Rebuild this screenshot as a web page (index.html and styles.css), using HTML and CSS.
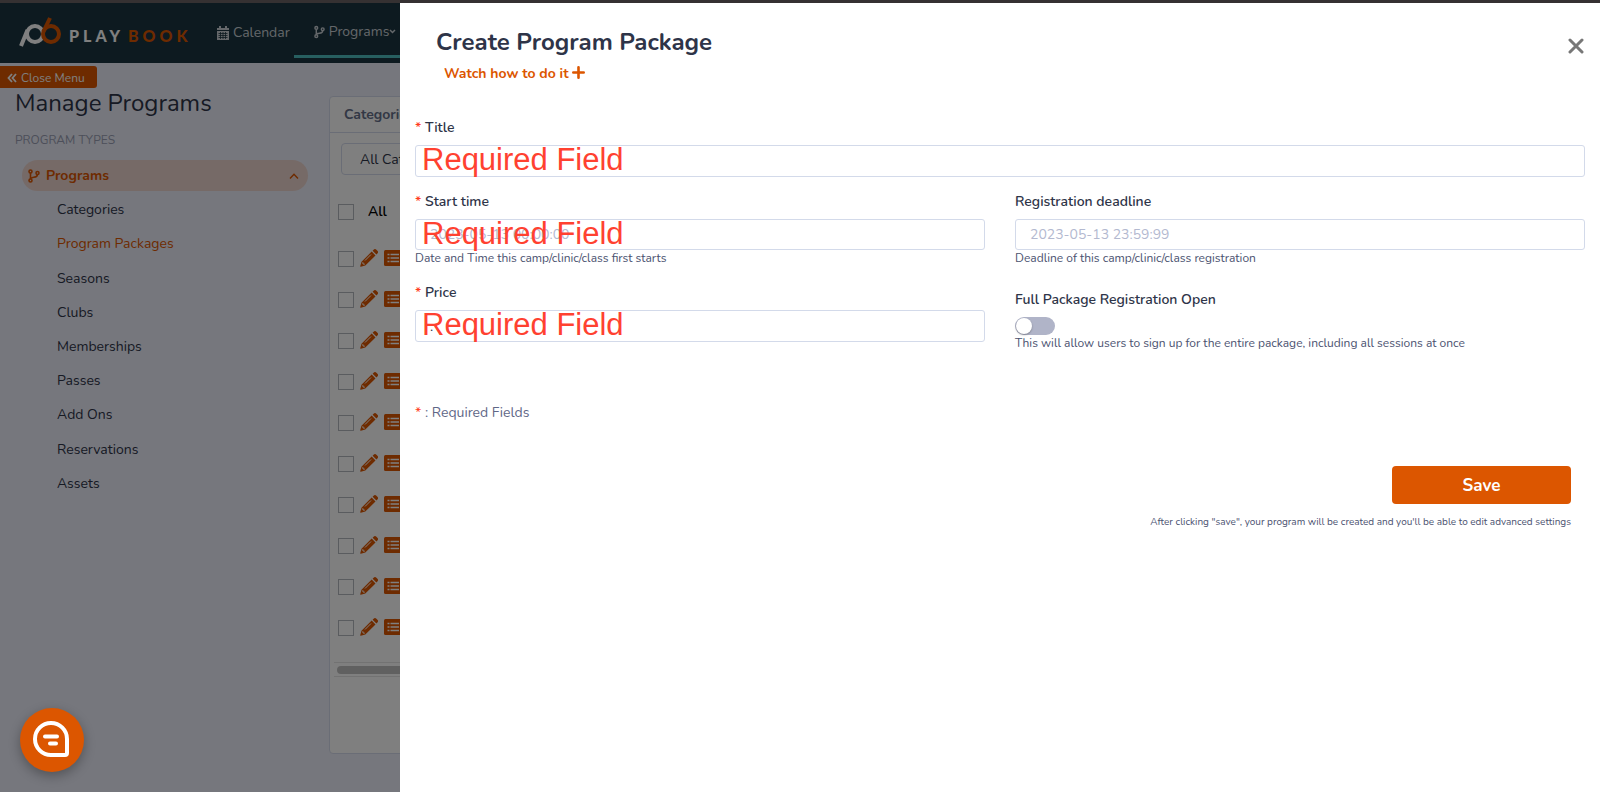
FILE: index.html
```html
<!DOCTYPE html>
<html lang="en">
  <head>
    <meta charset="UTF-8">
    <title>Create Program Package</title>
    <meta name="viewport" content="width=device-width, initial-scale=1">
    <link rel="stylesheet" href="styles.css">
  </head>
  <body>
    <svg class="sprite" aria-hidden="true">
      <symbol id="icon-branch" viewBox="0 0 12 14">
        <g fill="none" stroke="currentColor" stroke-width="1.6">
          <circle cx="2.5" cy="2.5" r="1.5"/>
          <circle cx="2.5" cy="11.5" r="1.5"/>
          <circle cx="9.5" cy="4" r="1.5"/>
          <path d="M2.5 4v6M9.5 5.5c0 3-3 2.500-5.500 3.200C3 9 2.500 9.500 2.500 10"/>
        </g>
      </symbol>
      <symbol id="icon-pencil" viewBox="0 0 18 18">
        <path fill="currentColor" d="M12.600 1.700l1-1a2 2 0 0 1 2.800 0l1 1a2 2 0 0 1 0 2.800l-1 1zM11.700 2.600l3.800 3.800L5.300 16.600l-4.500 1.200c-.4.100-.7-.2-.6-.6l1.300-4.400z"/>
        <path fill="none" stroke="#fff" stroke-width="1" d="M5 11.500l6-6M2.800 13.200l.2 1.800 1.800.2"/>
      </symbol>
      <symbol id="icon-list" viewBox="0 0 18 16">
        <rect width="18" height="16" rx="1.500" fill="currentColor"/>
        <path fill="none" stroke="#fff" stroke-width="1.400" d="M3.500 4.500h2M6.500 4.500H15M3.500 8h2M6.500 8H15M3.500 11.500h2M6.500 11.500H15"/>
      </symbol>
    </svg>

    <div class="top-strip"></div>

    <div class="page">
      <header class="navbar">
        <a href="#" class="logo">
          <svg width="44" height="32" viewBox="0 0 44 32" fill="none" stroke-width="4">
            <path stroke="#fff" d="M3 29L9.500 13"/>
            <circle stroke="#fff" cx="17" cy="17" r="8"/>
            <circle stroke="#dc5600" cx="33" cy="17" r="8"/>
            <path stroke="#dc5600" d="M25.500 14.500L32 1"/>
          </svg>
          <span class="logo-text">PLAY<b>BOOK</b></span>
        </a>
        <a href="#" class="nav-link">
          <svg width="12" height="14" viewBox="0 0 12 14">
            <path fill="currentColor" d="M2 0h2v2h4V0h2v2h2v2H0V2h2zM0 5h12v9H0z"/>
            <path stroke="#1a3540" d="M1.500 7.500h9M1.500 9.500h9M1.500 11.500h9M3.500 6v7M6 6v7M8.500 6v7" stroke-width=".8"/>
          </svg>
          Calendar
        </a>
        <a href="#" class="nav-link active">
          <svg width="11" height="14"><use href="#icon-branch"/></svg>
          Programs
          <svg class="caret" width="7" height="5" viewBox="0 0 7 5" fill="none" stroke="currentColor" stroke-width="1.500"><path d="M1 1l2.500 2.500L6 1"/></svg>
        </a>
      </header>

      <div class="content">
        <aside class="sidebar">
          <button type="button" class="close-menu">
            <svg width="10" height="10" viewBox="0 0 10 10" fill="none" stroke="currentColor" stroke-width="1.800"><path d="M5 1L1.500 5 5 9M9 1L5.500 5 9 9"/></svg>
            Close Menu
          </button>
          <h1>Manage Programs</h1>
          <h6>PROGRAM TYPES</h6>
          <a href="#" class="menu-group">
            <svg width="12" height="14"><use href="#icon-branch"/></svg>
            <span>Programs</span>
            <svg width="10" height="6" viewBox="0 0 10 6" fill="none" stroke="currentColor" stroke-width="1.400"><path d="M1 5.500L5 1.200 9 5.500"/></svg>
          </a>
          <nav class="submenu">
            <a href="#">Categories</a>
            <a href="#" class="current">Program Packages</a>
            <a href="#">Seasons</a>
            <a href="#">Clubs</a>
            <a href="#">Memberships</a>
            <a href="#">Passes</a>
            <a href="#">Add Ons</a>
            <a href="#">Reservations</a>
            <a href="#">Assets</a>
          </nav>
        </aside>

        <main class="card">
          <div class="card-header">Categories</div>
          <div class="card-body">
            <select class="filter" aria-label="Category">
              <option>All Categories</option>
            </select>
            <table class="packages">
              <thead>
                <tr><th><input type="checkbox" id="all"></th><th class="all"><label for="all">All</label></th></tr>
              </thead>
              <tbody id="rows"></tbody>
            </table>
            <div class="scrollbar"><div class="thumb"></div></div>
          </div>
        </main>
      </div>
    </div>

    <div class="overlay"></div>

    <section class="drawer">
      <div class="drawer-header">
        <div>
          <h2>Create Program Package</h2>
          <a href="#" class="watch">
            Watch how to do it
            <svg width="13" height="13" viewBox="0 0 13 13" stroke="currentColor" stroke-width="2.600" stroke-linecap="round"><path d="M6.500 1.300v10.400M1.300 6.500h10.400"/></svg>
          </a>
        </div>
        <button type="button" class="close" aria-label="Close">
          <svg width="16" height="16" viewBox="0 0 16 16" stroke="currentColor" stroke-width="3" stroke-linecap="round"><path d="M2 2l12 12M14 2L2 14"/></svg>
        </button>
      </div>

      <form id="package-form">
        <div class="field wide">
          <label for="title"><i>*</i> Title</label>
          <div class="control">
            <input type="text" id="title" name="title">
            <span class="note">Required Field</span>
          </div>
        </div>

        <div class="field">
          <label for="start"><i>*</i> Start time</label>
          <div class="control date">
            <input type="text" id="start" name="start" placeholder="2023-05-13 00:00:00">
            <span class="note">Required Field</span>
          </div>
          <small>Date and Time this camp/clinic/class first starts</small>
        </div>

        <div class="field">
          <label for="deadline">Registration deadline</label>
          <div class="control date">
            <input type="text" id="deadline" name="deadline" placeholder="2023-05-13 23:59:99">
          </div>
          <small>Deadline of this camp/clinic/class registration</small>
        </div>

        <div class="field">
          <label for="price"><i>*</i> Price</label>
          <div class="control">
            <input type="text" id="price" name="price" value=".">
            <span class="note">Required Field</span>
          </div>
        </div>

        <div class="field toggle-field">
          <label for="open">Full Package Registration Open</label>
          <input type="checkbox" id="open" name="open" class="toggle">
          <small>This will allow users to sign up for the entire package, including all sessions at once</small>
        </div>

        <p class="legend"><i>*</i> : Required Fields</p>

        <div class="actions">
          <button type="submit" class="save">Save</button>
          <p>After clicking "save", your program will be created and you'll be able to edit advanced settings</p>
        </div>
      </form>
    </section>

    <button type="button" class="chat" aria-label="Chat">
      <svg width="36" height="36" viewBox="0 0 36 36" fill="none" stroke="#fff" stroke-width="4" stroke-linecap="round" stroke-linejoin="round">
        <path d="M18 2a16 16 0 0 0 0 32h14a2 2 0 0 0 2-2V18A16 16 0 0 0 18 2z"/>
        <path d="M12 15.500h12M17 22.500h6"/>
      </svg>
    </button>

    <script>
      // Package rows
      const rows = document.getElementById('rows');
      for (let i = 1; i <= 10; i++) {
        rows.insertAdjacentHTML('beforeend', `
          <tr>
            <td><input type="checkbox" aria-label="Select package ${i}"></td>
            <td>
              <div class="row-actions">
                <a href="#" aria-label="Edit"><svg width="18" height="18"><use href="#icon-pencil"/></svg></a>
                <a href="#" aria-label="Details"><svg width="18" height="16"><use href="#icon-list"/></svg></a>
              </div>
            </td>
          </tr>`);
      }

      document.getElementById('package-form').addEventListener('submit', function (e) {
        e.preventDefault();
      });
    </script>
  </body>
</html>
```
FILE: styles.css
```css
* {
  box-sizing: border-box;
}

body {
  margin: 0;
  min-height: 100vh;
  background: #eceefa;
  font-family: Nunito, "Noto Sans", sans-serif;
  font-size: 14px;
  line-height: 20px;
  color: #2e3448;
  overflow: hidden;
}

a {
  color: inherit;
  text-decoration: none;
}

button {
  border: 0;
  font-family: inherit;
  cursor: pointer;
}

h1, h2, h6, p {
  margin: 0;
}

.sprite {
  display: none;
}

.top-strip {
  height: 3px;
  background: #353132;
}

/* Page behind the drawer */
.page {
  display: flex;
  flex-direction: column;
  height: calc(100vh - 3px);
}

.navbar {
  display: flex;
  flex: none;
  height: 60px;
  padding-left: 18px;
  background: #1a3540;
  color: #fff;
}

.logo {
  display: flex;
  align-items: center;
  gap: 7px;
  width: 191px;
}

.logo-text {
  padding-top: 4px;
  font: 900 16px Lato, sans-serif;
  letter-spacing: 4px;
}

.logo-text b {
  margin-left: 4px;
  color: #dc5600;
}

.nav-link {
  display: flex;
  align-items: center;
  gap: 4px;
  padding: 0 4px 0 8px;
  color: #c8ced4;
}

.nav-link.active {
  margin-bottom: 5px;
  padding-top: 5px;
  padding-left: 20px;
  border-bottom: 3px solid #4fbfc0;
}

.nav-link .caret {
  margin-left: -4px;
}

.content {
  display: flex;
  flex: 1;
}

.sidebar {
  width: 329px;
  flex: none;
}

.close-menu {
  display: flex;
  align-items: center;
  gap: 4px;
  height: 22px;
  margin-top: 3px;
  padding: 1px 12px 0 7px;
  border-radius: 0 3px 3px 0;
  background: #dc5600;
  color: #fff;
  font-size: 12px;
}

h1 {
  padding: 0 15px;
  font-size: 24px;
  font-weight: 400;
  line-height: 30px;
}

h6 {
  margin: 13px 15px 11px;
  font-size: 12px;
  font-weight: 400;
  line-height: 18px;
  color: #9a9fb4;
}

.menu-group {
  display: flex;
  align-items: center;
  gap: 6px;
  height: 31px;
  margin: 0 21px 0 22px;
  padding: 0 9px 0 6px;
  border-radius: 16px;
  background: #ecd5cf;
  color: #dc5600;
  font-weight: 700;
}

.menu-group span {
  flex: 1;
}

.submenu {
  display: grid;
  grid-auto-rows: 1fr;
  align-items: center;
  height: 308px;
  margin: 2px 0 0 57px;
}

.submenu .current {
  color: #dc5600;
}

.card {
  flex: 1;
  margin: 33px 15px 38px 0;
  border: 1px solid #d5dbec;
  border-radius: 4px;
  background: #fff;
}

.card-header {
  height: 36px;
  padding: 8px 14px;
  border-bottom: 1px solid #d5dbec;
  color: #66708a;
  font-weight: 700;
}

.card-body {
  padding: 10px 0 0 4px;
}

.filter {
  appearance: none;
  display: block;
  width: 300px;
  height: 32px;
  margin-left: 7px;
  padding: 1px 18px 0;
  border: 1px solid #d5dbec;
  border-radius: 4px;
  background: #fff;
  color: inherit;
  font: inherit;
}

.packages {
  height: 463px;
  margin-top: 10px;
  margin-left: 4px;
  border-collapse: collapse;
}

.packages th,
.packages td {
  padding: 0;
  height: 40px;
  text-align: left;
}

.packages thead th {
  height: 54px;
}

.packages .all {
  padding-left: 14px;
  color: #000;
  font-weight: 600;
}

.packages input {
  appearance: none;
  display: block;
  width: 16px;
  height: 16px;
  margin: 0;
  border: 1px solid #b4b8be;
}

.row-actions {
  display: flex;
  align-items: center;
  gap: 6px;
  padding: 0 0 2px 6px;
  color: #dc5600;
}

.row-actions svg {
  display: block;
}

.scrollbar {
  height: 15px;
  margin-top: 14px;
  padding: 3px;
  border-top: 1px solid #e4e4e4;
  border-bottom: 1px solid #e4e4e4;
}

.thumb {
  width: 50%;
  height: 8px;
  border-radius: 4px;
  background: #c1c1c1;
}

.overlay {
  position: fixed;
  inset: 3px 0 0;
  background: rgba(0, 0, 0, 0.5);
}

/* Drawer */
.drawer {
  position: fixed;
  top: 3px;
  right: 0;
  bottom: 0;
  width: 75%;
  padding: 0 15px;
  background: #fff;
}

.drawer-header {
  display: flex;
  justify-content: space-between;
  align-items: flex-start;
  padding: 24px 0 0 21px;
}

h2 {
  font-size: 24px;
  font-weight: 700;
  line-height: 30px;
}

.watch {
  display: flex;
  align-items: flex-start;
  gap: 3px;
  margin: 7px 8px 5px;
  color: #dc5600;
  font-weight: 700;
}

.watch svg {
  margin-top: 2px;
}

.close {
  margin-top: 11px;
  padding: 0 1px;
  background: none;
  color: #777;
}

.close svg {
  display: block;
}

form {
  display: grid;
  grid-template-columns: 1fr 1fr;
  column-gap: 30px;
  padding-top: 28px;
}

.wide,
.legend,
.actions {
  grid-column: 1 / -1;
}

.field label {
  display: block;
  margin-bottom: 6px;
  font-weight: 600;
  line-height: 22px;
}

i {
  color: #ff3b20;
  font-style: normal;
}

.control {
  position: relative;
}

.control input {
  display: block;
  width: 100%;
  height: 32px;
  padding: 0 14px;
  border: 1px solid #d3daea;
  border-radius: 3px;
  color: #2e3448;
  font: inherit;
}

.control.date input {
  height: 31px;
}

.control input::placeholder {
  color: #b3b9d0;
}

.note {
  position: absolute;
  top: -1px;
  left: 7px;
  color: #ff4130;
  font: 31px/32px "Liberation Sans", Arial, sans-serif;
  pointer-events: none;
}

.wide {
  margin-bottom: 14px;
}

.field small {
  display: block;
  font-size: 12px;
  line-height: 16px;
  color: #4b5270;
}

.field + .field {
  margin-bottom: 16px;
}

.toggle-field {
  padding-top: 7px;
}

.toggle {
  appearance: none;
  display: block;
  width: 40px;
  height: 18px;
  margin: 0;
  padding: 1px;
  border-radius: 9px;
  background: #b0b4c8;
}

.toggle::before {
  content: "";
  display: block;
  width: 16px;
  height: 16px;
  border-radius: 50%;
  background: #fff;
  box-shadow: 0 1px 2px rgba(0, 0, 0, 0.3);
}

.legend {
  margin-top: 36px;
  color: #5f6787;
}

.actions {
  display: flex;
  flex-direction: column;
  align-items: flex-end;
  gap: 8px;
  margin-top: 43px;
  padding-right: 14px;
  font-size: 10px;
  color: #4b5270;
}

.save {
  width: 179px;
  height: 38px;
  border-radius: 4px;
  background: #dc5600;
  color: #fff;
  font-size: 17px;
  font-weight: 700;
}

.chat {
  display: flex;
  align-items: center;
  justify-content: center;
  position: fixed;
  left: 20px;
  bottom: 20px;
  width: 64px;
  height: 64px;
  padding: 0 2px 2px 0;
  border-radius: 50%;
  background: #dc5600;
  box-shadow: 0 4px 12px rgba(0, 0, 0, 0.3);
}
```
